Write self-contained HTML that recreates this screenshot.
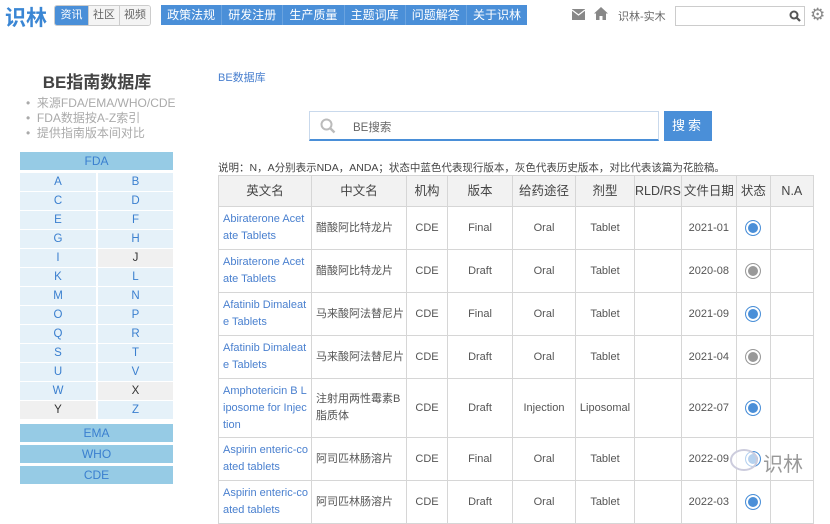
<!DOCTYPE html>
<html><head><meta charset="utf-8"><style>
*{margin:0;padding:0;box-sizing:border-box}
body{width:830px;height:498px;overflow:hidden;background:#fff;font-family:"Liberation Sans","Noto Sans CJK SC",sans-serif;color:#555;position:relative}
.a{position:absolute}
.logo{left:5px;top:2px;font-size:21px;font-weight:bold;color:#3a86d4}
.tabs{left:54px;top:5px;height:21px;display:flex;border:1px solid #ccc;border-radius:3px;overflow:hidden;font-size:11px}
.tabs div{width:31px;text-align:center;line-height:19px;background:#f4f4f4;color:#666;border-left:1px solid #ccc}
.tabs div:first-child{background:#4a8fd8;color:#fff;border:none;width:33px}
.nav{left:161px;top:5px;height:20px;width:366px;background:#4a8fd8;display:flex;font-size:12px;color:#fff}
.nav div{flex:1;text-align:center;line-height:20px;border-right:1px solid #6aa3df}
.side h1{font-size:17px;color:#444;font-weight:bold}
.grid{left:20px;top:173px;width:153px;display:grid;grid-template-columns:76px 75px;column-gap:2px;row-gap:0px}
.grid div{height:19px;background:#e5f1f9;color:#3a7fcf;text-align:center;font-size:11.5px;line-height:18px;border-bottom:1px solid #fff}
.grid div.g{background:#f0f0f0;color:#333}
.bar{left:20px;width:153px;height:18px;background:#96cbe5;color:#3a7fcf;text-align:center;font-size:12px;line-height:18px}
table{position:absolute;left:218px;top:175px;border-collapse:collapse;table-layout:fixed;font-size:11px}
td,th{border:1px solid #d6d6d6;text-align:center;color:#555;font-weight:normal;padding:0 2px;line-height:17px;word-break:break-all;overflow:hidden}
th{background:#f2f2f2;height:31px;font-size:12.5px;color:#444;word-break:keep-all;white-space:nowrap}
td.e{text-align:left;color:#4a80cf;padding-left:4px}
td.c{text-align:left;white-space:nowrap;padding-left:4px}
.dot{display:inline-block;width:16px;height:16px;border-radius:50%;border:1px solid #4a8fd8;background:#4a8fd8;box-shadow:inset 0 0 0 2px #fff;vertical-align:middle}
.dot.gr{border-color:#999;background:#999}
</style></head><body>
<div class="a logo">识林</div>
<div class="a tabs"><div>资讯</div><div>社区</div><div>视频</div></div>
<div class="a nav"><div>政策法规</div><div>研发注册</div><div>生产质量</div><div>主题词库</div><div>问题解答</div><div style="border:none">关于识林</div></div>
<svg class="a" style="left:572px;top:9px" width="13" height="11" viewBox="0 0 13 11"><rect x="0" y="0" width="13" height="11" fill="#888"/><path d="M0 1 L6.5 6 L13 1" stroke="#fff" stroke-width="1.2" fill="none"/></svg>
<svg class="a" style="left:594px;top:7px" width="14" height="13" viewBox="0 0 14 13"><path d="M7 0 L14 6.5 L12 6.5 L12 13 L8.5 13 L8.5 9 L5.5 9 L5.5 13 L2 13 L2 6.5 L0 6.5Z" fill="#888"/></svg>
<div class="a" style="left:618px;top:8px;font-size:11px;color:#666">识林-实木</div>
<div class="a" style="left:675px;top:6px;width:130px;height:20px;border:1px solid #ccc"></div>
<svg class="a" style="left:789px;top:10px" width="12" height="12" viewBox="0 0 12 12"><circle cx="5" cy="5" r="3.5" stroke="#555" stroke-width="2" fill="none"/><path d="M7.5 7.5L11 11" stroke="#555" stroke-width="2.2"/></svg>
<div class="a" style="left:810px;top:5px;font-size:17px;line-height:20px;color:#888">⚙</div>

<div class="a side" style="left:0;top:68px;width:194px;text-align:center"><h1>BE指南数据库</h1></div>
<div class="a" style="left:26px;top:96px;font-size:12px;color:#aaa;line-height:15px">
<div>•&nbsp; 来源FDA/EMA/WHO/CDE</div><div>•&nbsp; FDA数据按A-Z索引</div><div>•&nbsp; 提供指南版本间对比</div></div>
<div class="a bar" style="top:152px">FDA</div>
<div class="a grid">
<div>A</div><div>B</div><div>C</div><div>D</div><div>E</div><div>F</div><div>G</div><div>H</div><div>I</div><div class="g">J</div><div>K</div><div>L</div><div>M</div><div>N</div><div>O</div><div>P</div><div>Q</div><div>R</div><div>S</div><div>T</div><div>U</div><div>V</div><div>W</div><div class="g">X</div><div class="g">Y</div><div>Z</div></div>
<div class="a bar" style="top:424px">EMA</div>
<div class="a bar" style="top:445px">WHO</div>
<div class="a bar" style="top:466px">CDE</div>

<div class="a" style="left:218px;top:69px;font-size:11px;color:#4a80cf">BE数据库</div>
<div class="a" style="left:309px;top:111px;width:350px;height:30px;border:1px solid #c9d9ec;border-bottom:2px solid #4a8fd8"></div>
<svg class="a" style="left:320px;top:118px" width="16" height="16" viewBox="0 0 16 16"><circle cx="6.5" cy="6.5" r="5" stroke="#bbb" stroke-width="2" fill="none"/><path d="M10 10L14.5 14.5" stroke="#bbb" stroke-width="2.4"/></svg>
<div class="a" style="left:353px;top:119px;font-size:11.5px;color:#666">BE搜索</div>
<div class="a" style="left:664px;top:111px;width:48px;height:30px;background:#4a8fd8;color:#fff;font-size:13px;text-align:center;line-height:30px;letter-spacing:3px">搜索</div>
<div class="a" style="left:218px;top:160px;font-size:10.5px;color:#444;white-space:nowrap">说明：N，A分别表示NDA，ANDA；状态中蓝色代表现行版本，灰色代表历史版本，对比代表该篇为花脸稿。</div>

<table>
<colgroup><col style="width:93px"><col style="width:94px"><col style="width:41px"><col style="width:65px"><col style="width:63px"><col style="width:59px"><col style="width:46px"><col style="width:55px"><col style="width:34px"><col style="width:43px"></colgroup>
<tr><th>英文名</th><th>中文名</th><th>机构</th><th>版本</th><th>给药途径</th><th>剂型</th><th style="padding:0">RLD/RS</th><th style="padding:0">文件日期</th><th style="padding:0">状态</th><th>N.A</th></tr>
<tr style="height:43px"><td class="e">Abiraterone Acetate Tablets</td><td class="c">醋酸阿比特龙片</td><td>CDE</td><td>Final</td><td>Oral</td><td>Tablet</td><td></td><td>2021-01</td><td><span class="dot"></span></td><td></td></tr>
<tr style="height:43px"><td class="e">Abiraterone Acetate Tablets</td><td class="c">醋酸阿比特龙片</td><td>CDE</td><td>Draft</td><td>Oral</td><td>Tablet</td><td></td><td>2020-08</td><td><span class="dot gr"></span></td><td></td></tr>
<tr style="height:43px"><td class="e">Afatinib Dimaleate Tablets</td><td class="c">马来酸阿法替尼片</td><td>CDE</td><td>Final</td><td>Oral</td><td>Tablet</td><td></td><td>2021-09</td><td><span class="dot"></span></td><td></td></tr>
<tr style="height:43px"><td class="e">Afatinib Dimaleate Tablets</td><td class="c">马来酸阿法替尼片</td><td>CDE</td><td>Draft</td><td>Oral</td><td>Tablet</td><td></td><td>2021-04</td><td><span class="dot gr"></span></td><td></td></tr>
<tr style="height:59px"><td class="e">Amphotericin B Liposome for Injection</td><td class="c">注射用两性霉素B<br>脂质体</td><td>CDE</td><td>Draft</td><td>Injection</td><td>Liposomal</td><td></td><td>2022-07</td><td><span class="dot"></span></td><td></td></tr>
<tr style="height:43px"><td class="e">Aspirin enteric-coated tablets</td><td class="c">阿司匹林肠溶片</td><td>CDE</td><td>Final</td><td>Oral</td><td>Tablet</td><td></td><td>2022-09</td><td><span class="dot"></span></td><td></td></tr>
<tr style="height:43px"><td class="e">Aspirin enteric-coated tablets</td><td class="c">阿司匹林肠溶片</td><td>CDE</td><td>Draft</td><td>Oral</td><td>Tablet</td><td></td><td>2022-03</td><td><span class="dot"></span></td><td></td></tr>
</table>
<div class="a" style="left:730px;top:449px;width:28px;height:22px;border-radius:50%;border:2px solid #ccd;background:rgba(255,255,255,.6)"></div>
<div class="a" style="left:763px;top:448px;font-size:20px;color:#999">识林</div>
</body></html>
